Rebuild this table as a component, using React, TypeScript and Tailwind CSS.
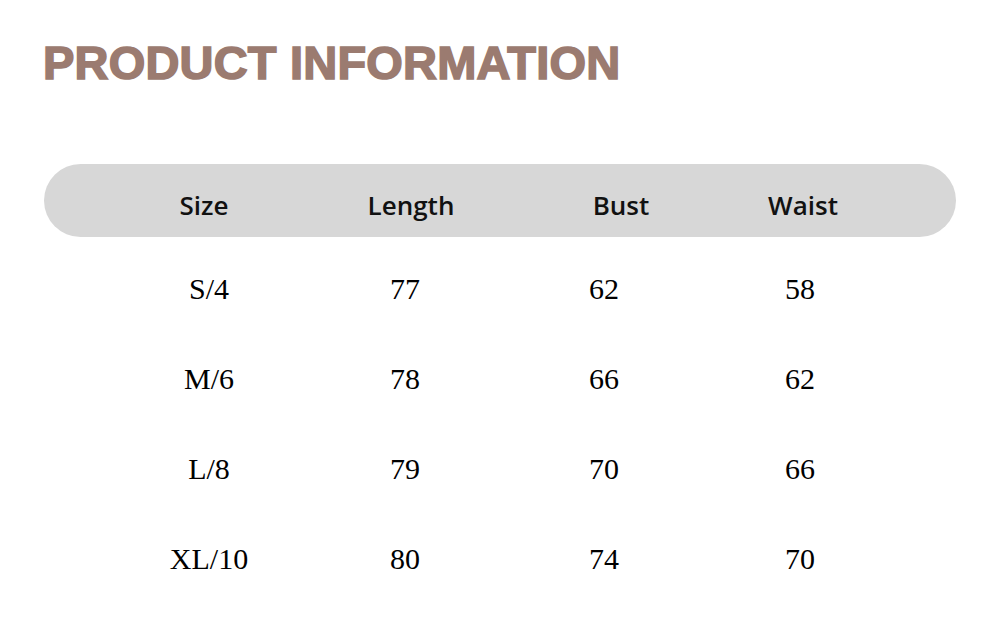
const header = [
  { label: "Size", ml: "ml-[80px]" },
  { label: "Length", ml: "ml-[47px]" },
  { label: "Bust", ml: "ml-[50px]" },
  { label: "Waist", ml: "ml-[22px]" },
];

const rows = [
  ["S/4", "77", "62", "58"],
  ["M/6", "78", "66", "62"],
  ["L/8", "79", "70", "66"],
  ["XL/10", "80", "74", "70"],
];

const bodyMl = ["ml-[85px]", "ml-[36px]", "ml-[39px]", "ml-[36px]"];

export default function App() {
  return (
    <div className="w-[1000px] h-[642px] bg-white overflow-hidden">
      {/* Title */}
      <h1 className="pt-[39px] pl-[43px] text-[47px] leading-none font-bold tracking-[0.2px] text-[#9b7b70] [-webkit-text-stroke:1.6px_#9b7b70] font-['Liberation_Sans',Arial,sans-serif]">
        PRODUCT INFORMATION
      </h1>

      <div className="px-[44px] mt-[78px]">
        {/* Header pill */}
        <div className="flex h-[73px] items-center pt-[8px] rounded-full bg-[#d7d7d7] text-[26px] leading-none font-semibold text-[#111] font-['Open_Sans','Noto_Sans',sans-serif]">
          {header.map((h) => (
            <div key={h.label} className={`${h.ml} w-[160px] text-center`}>
              {h.label}
            </div>
          ))}
        </div>

        {/* Body rows */}
        <div className="mt-[7px] text-[30px] leading-none text-black font-['Liberation_Serif','Times_New_Roman',serif]">
          {rows.map((r) => (
            <div key={r[0]} className="flex h-[90px] items-center">
              {r.map((v, i) => (
                <div key={i} className={`${bodyMl[i]} w-[160px] text-center`}>
                  {v}
                </div>
              ))}
            </div>
          ))}
        </div>
      </div>
    </div>
  );
}
